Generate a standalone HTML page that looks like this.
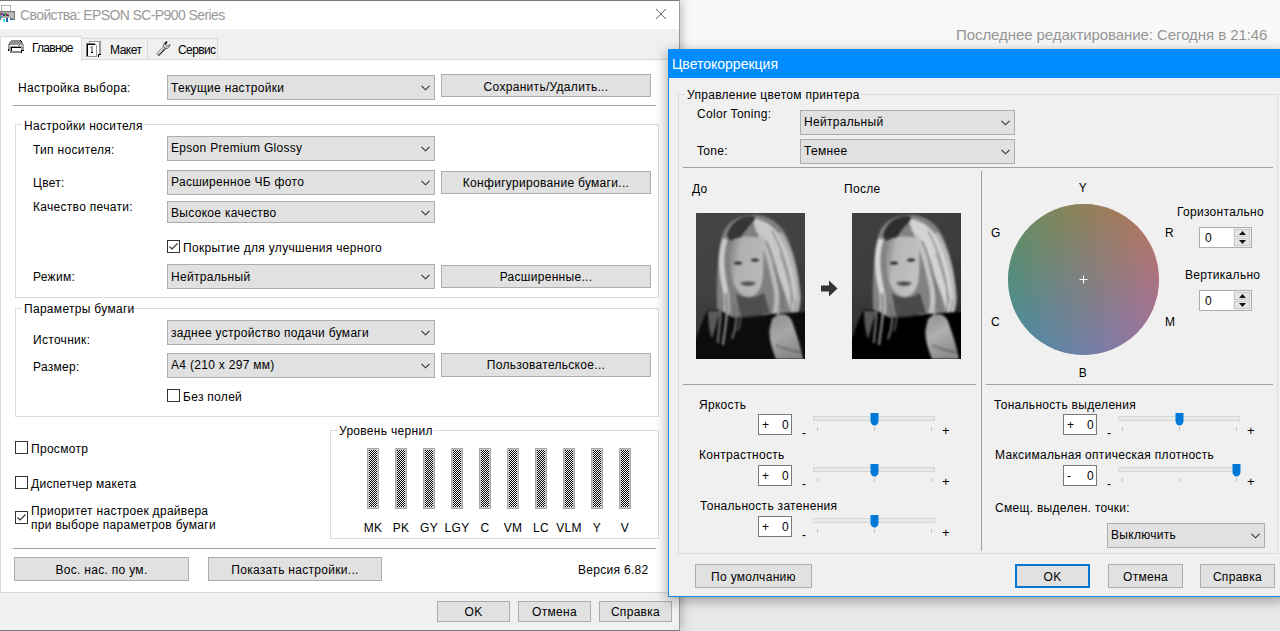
<!DOCTYPE html><html><head><meta charset="utf-8"><style>
html,body{margin:0;padding:0;width:1280px;height:631px;overflow:hidden;background:#f9f9f9;position:relative}
.a{position:absolute}
.t{position:absolute;white-space:nowrap;font-family:"Liberation Sans",sans-serif;color:#000;letter-spacing:0.3px}
</style></head><body>
<div class="t" style="left:956px;top:26px;font-size:15px;line-height:18px;color:#959595;letter-spacing:-0.07px">Последнее редактирование: Сегодня в 21:46</div>
<div class="a" style="left:679px;top:300px;width:601px;height:331px;background:#e8e8e8"></div>
<div class="a" style="left:0px;top:0px;width:679px;height:631px;box-shadow:2px 0 10px rgba(0,0,0,0.28)"></div>
<div class="a" style="left:0px;top:0px;width:680px;height:631px;background:#f0f0f0;border:1px solid #9a9a9a;border-bottom-color:#7a7a7a;box-sizing:border-box;border-left:none"></div>
<div class="a" style="left:0px;top:0px;width:679px;height:29px;background:#fff;border-top:1px solid #7a7a7a;box-sizing:border-box"></div>
<div class="t" style="left:20px;top:6px;font-size:14px;line-height:18px;color:#999;letter-spacing:-0.6px">Свойства: EPSON SC-P900 Series</div>
<svg width="16" height="20" style="position:absolute;left:0;top:4px" viewBox="0 0 16 20" shape-rendering="crispEdges"><rect x="1.5" y="1.5" width="9" height="6" fill="#fff" stroke="#b0b0b0"/><rect x="0" y="7" width="15" height="9" fill="#a8a8a8"/><rect x="0.5" y="7.5" width="14" height="8" fill="none" stroke="#777"/><rect x="9" y="9" width="5" height="5" fill="#bbb"/><rect x="1" y="9" width="2" height="2" fill="#a030a0"/><rect x="3" y="10" width="2" height="2" fill="#2040a0"/><rect x="4" y="9" width="2" height="2" fill="#30a040"/><rect x="6" y="10" width="2" height="2" fill="#c02020"/><rect x="7" y="11" width="2" height="1" fill="#203080"/><rect x="0" y="12" width="2" height="2" fill="#30a0a0"/><rect x="1" y="14" width="9" height="5" fill="#fff"/><rect x="3" y="15" width="2" height="3" fill="#30e0e0"/><rect x="6" y="14" width="2" height="4" fill="#2060a0"/><rect x="10" y="14" width="2" height="2" fill="#3070b0"/></svg>
<svg width="12" height="12" style="position:absolute;left:655px;top:8px"><path d="M1 1 L11 11 M11 1 L1 11" stroke="#666" stroke-width="1"/></svg>
<div class="a" style="left:81px;top:38px;width:67px;height:22px;background:#f0f0f0;border:1px solid #d9d9d9;box-sizing:border-box"></div>
<div class="a" style="left:147px;top:38px;width:71px;height:22px;background:#f0f0f0;border:1px solid #d9d9d9;box-sizing:border-box"></div>
<div class="a" style="left:0px;top:59px;width:679px;height:534px;background:#fff;border:1px solid #d9d9d9;box-sizing:border-box"></div>
<div class="a" style="left:0px;top:36px;width:82px;height:25px;background:#fff;border:1px solid #d9d9d9;border-bottom:none;box-sizing:border-box"></div>
<div class="t" style="left:32px;top:41px;font-size:12px;line-height:14px;color:#000;letter-spacing:-0.75px">Главное</div>
<div class="t" style="left:110px;top:43px;font-size:12px;line-height:14px;color:#000;letter-spacing:-0.5px">Макет</div>
<div class="t" style="left:178px;top:43px;font-size:12px;line-height:14px;color:#000;letter-spacing:-0.6px">Сервис</div>
<svg width="16" height="14" style="position:absolute;left:8px;top:40px" viewBox="0 0 16 14" shape-rendering="crispEdges"><path d="M3 0 H13 V1 H14 V2 H15 V4 H1 V2 H2 V1 H3 Z" fill="#8c8c8c"/><rect x="0" y="4" width="16" height="7" fill="#9a9a9a"/><rect x="1" y="5" width="9" height="1" fill="#fff"/><rect x="12" y="5" width="3" height="1" fill="#e0e0e0"/><rect x="1" y="4" width="1" height="1" fill="#000"/><rect x="12" y="0" width="1" height="1" fill="#000"/><rect x="13" y="1" width="1" height="1" fill="#000"/><rect x="3" y="7" width="10" height="1" fill="#000"/><rect x="3" y="7" width="1" height="4" fill="#000"/><rect x="4" y="8" width="9" height="3" fill="#fff"/><rect x="2" y="11" width="11" height="2" fill="#8a8a8a"/><rect x="0" y="9" width="1" height="2" fill="#000"/><rect x="13" y="10" width="3" height="1" fill="#000"/><rect x="13" y="11" width="1" height="2" fill="#000"/></svg>
<svg width="16" height="17" style="position:absolute;left:86px;top:41px" viewBox="0 0 16 17" shape-rendering="crispEdges"><rect x="3" y="0" width="12" height="1" fill="#999"/><rect x="3" y="0" width="1" height="2" fill="#999"/><rect x="13" y="0" width="2" height="13" fill="#999"/><rect x="4" y="1" width="9" height="12" fill="#fff"/><rect x="12" y="13" width="3" height="1" fill="#000"/><rect x="12" y="13" width="1" height="3" fill="#000"/><rect x="0" y="2" width="11" height="14" fill="#fff"/><rect x="0" y="2" width="9" height="1" fill="#777"/><rect x="0" y="2" width="1" height="14" fill="#777"/><rect x="1" y="3" width="8" height="1" fill="#000"/><rect x="1" y="3" width="1" height="12" fill="#000"/><rect x="9" y="3" width="1" height="1" fill="#777"/><rect x="10" y="4" width="1" height="12" fill="#999"/><rect x="0" y="15" width="11" height="1" fill="#999"/><rect x="4" y="6" width="2" height="1" fill="#999"/><rect x="5" y="5" width="2" height="7" fill="#999"/><rect x="5" y="11" width="2" height="1" fill="#000"/></svg>
<svg width="16" height="16" style="position:absolute;left:155px;top:41px" viewBox="0 0 16 16"><path d="M1.5 12.5 L9 5 L11 7 L3.5 14.5 Z" fill="#d8d8d8" stroke="#777" stroke-width="0.8"/><path d="M3.5 14.5 L11 7" stroke="#000" stroke-width="1.3" stroke-dasharray="1.2 0.6"/><path d="M8.5 5.5 C8 3 9.5 1 12 0.8 L10.5 3 L12.5 5 L15 3.5 C15 6 13 8 10.5 7.5 Z" fill="#c8c8c8" stroke="#555" stroke-width="0.8"/><path d="M12 0.8 L10 3" stroke="#000" stroke-width="1.3"/></svg>
<div class="t" style="left:18px;top:81px;font-size:12px;line-height:14px;color:#000;">Настройка выбора:</div>
<div class="a" style="left:167px;top:75px;width:268px;height:25px;background:#e1e1e1;border:1px solid #adadad;box-sizing:border-box"></div>
<div class="t" style="left:171px;top:81px;font-size:12px;line-height:14px;color:#000;">Текущие настройки</div>
<svg width="9" height="6" viewBox="0 0 9 6" style="position:absolute;left:421px;top:85px"><path d="M0.5 0.8 L4.5 4.8 L8.5 0.8" fill="none" stroke="#333" stroke-width="1.1"/></svg>
<div class="a" style="left:441px;top:74px;width:210px;height:23px;background:#e1e1e1;border:1px solid #adadad;box-sizing:border-box"></div>
<div class="t" style="left:441.0px;width:210px;text-align:center;top:80px;font-size:12px;line-height:14px;color:#000;">Сохранить/Удалить...</div>
<div class="a" style="left:13px;top:105px;width:643px;height:1px;background:#a0a0a0"></div>
<div class="a" style="left:15px;top:124px;width:644px;height:174px;border:1px solid #dcdcdc;box-sizing:border-box"></div>
<div class="a" style="left:22px;top:122px;width:122px;height:5px;background:#fff"></div>
<div class="t" style="left:24px;top:119px;font-size:12px;line-height:14px;color:#000;">Настройки носителя</div>
<div class="t" style="left:33px;top:143px;font-size:12px;line-height:14px;color:#000;">Тип носителя:</div>
<div class="a" style="left:167px;top:136px;width:268px;height:25px;background:#e1e1e1;border:1px solid #adadad;box-sizing:border-box"></div>
<div class="t" style="left:171px;top:141px;font-size:12px;line-height:14px;color:#000;">Epson Premium Glossy</div>
<svg width="9" height="6" viewBox="0 0 9 6" style="position:absolute;left:421px;top:146px"><path d="M0.5 0.8 L4.5 4.8 L8.5 0.8" fill="none" stroke="#333" stroke-width="1.1"/></svg>
<div class="t" style="left:33px;top:176px;font-size:12px;line-height:14px;color:#000;">Цвет:</div>
<div class="a" style="left:167px;top:170px;width:268px;height:25px;background:#e1e1e1;border:1px solid #adadad;box-sizing:border-box"></div>
<div class="t" style="left:171px;top:175px;font-size:12px;line-height:14px;color:#000;">Расширенное ЧБ фото</div>
<svg width="9" height="6" viewBox="0 0 9 6" style="position:absolute;left:421px;top:180px"><path d="M0.5 0.8 L4.5 4.8 L8.5 0.8" fill="none" stroke="#333" stroke-width="1.1"/></svg>
<div class="a" style="left:441px;top:171px;width:210px;height:23px;background:#e1e1e1;border:1px solid #adadad;box-sizing:border-box"></div>
<div class="t" style="left:441.0px;width:210px;text-align:center;top:176px;font-size:12px;line-height:14px;color:#000;">Конфигурирование бумаги...</div>
<div class="t" style="left:33px;top:200px;font-size:12px;line-height:14px;color:#000;">Качество печати:</div>
<div class="a" style="left:167px;top:201px;width:268px;height:22px;background:#e1e1e1;border:1px solid #adadad;box-sizing:border-box"></div>
<div class="t" style="left:171px;top:206px;font-size:12px;line-height:14px;color:#000;">Высокое качество</div>
<svg width="9" height="6" viewBox="0 0 9 6" style="position:absolute;left:421px;top:210px"><path d="M0.5 0.8 L4.5 4.8 L8.5 0.8" fill="none" stroke="#333" stroke-width="1.1"/></svg>
<div class="a" style="left:167px;top:240px;width:13px;height:13px;background:#fff;border:1px solid #333;box-sizing:border-box"></div>
<svg width="13" height="13" style="position:absolute;left:167px;top:240px"><path d="M2.5 6.5 L5 9 L10.5 3.5" fill="none" stroke="#333" stroke-width="1.2"/></svg>
<div class="t" style="left:183px;top:241px;font-size:12px;line-height:14px;color:#000;">Покрытие для улучшения черного</div>
<div class="t" style="left:33px;top:270px;font-size:12px;line-height:14px;color:#000;">Режим:</div>
<div class="a" style="left:167px;top:264px;width:268px;height:25px;background:#e1e1e1;border:1px solid #adadad;box-sizing:border-box"></div>
<div class="t" style="left:171px;top:270px;font-size:12px;line-height:14px;color:#000;">Нейтральный</div>
<svg width="9" height="6" viewBox="0 0 9 6" style="position:absolute;left:421px;top:274px"><path d="M0.5 0.8 L4.5 4.8 L8.5 0.8" fill="none" stroke="#333" stroke-width="1.1"/></svg>
<div class="a" style="left:441px;top:265px;width:210px;height:23px;background:#e1e1e1;border:1px solid #adadad;box-sizing:border-box"></div>
<div class="t" style="left:441.0px;width:210px;text-align:center;top:270px;font-size:12px;line-height:14px;color:#000;">Расширенные...</div>
<div class="a" style="left:15px;top:308px;width:644px;height:109px;border:1px solid #dcdcdc;box-sizing:border-box"></div>
<div class="a" style="left:22px;top:306px;width:110px;height:5px;background:#fff"></div>
<div class="t" style="left:24px;top:302px;font-size:12px;line-height:14px;color:#000;">Параметры бумаги</div>
<div class="t" style="left:33px;top:333px;font-size:12px;line-height:14px;color:#000;">Источник:</div>
<div class="a" style="left:167px;top:320px;width:268px;height:25px;background:#e1e1e1;border:1px solid #adadad;box-sizing:border-box"></div>
<div class="t" style="left:171px;top:326px;font-size:12px;line-height:14px;color:#000;">заднее устройство подачи бумаги</div>
<svg width="9" height="6" viewBox="0 0 9 6" style="position:absolute;left:421px;top:330px"><path d="M0.5 0.8 L4.5 4.8 L8.5 0.8" fill="none" stroke="#333" stroke-width="1.1"/></svg>
<div class="t" style="left:33px;top:360px;font-size:12px;line-height:14px;color:#000;">Размер:</div>
<div class="a" style="left:167px;top:353px;width:268px;height:25px;background:#e1e1e1;border:1px solid #adadad;box-sizing:border-box"></div>
<div class="t" style="left:171px;top:358px;font-size:12px;line-height:14px;color:#000;">A4 (210 x 297 мм)</div>
<svg width="9" height="6" viewBox="0 0 9 6" style="position:absolute;left:421px;top:363px"><path d="M0.5 0.8 L4.5 4.8 L8.5 0.8" fill="none" stroke="#333" stroke-width="1.1"/></svg>
<div class="a" style="left:441px;top:353px;width:210px;height:24px;background:#e1e1e1;border:1px solid #adadad;box-sizing:border-box"></div>
<div class="t" style="left:441.0px;width:210px;text-align:center;top:358px;font-size:12px;line-height:14px;color:#000;">Пользовательское...</div>
<div class="a" style="left:167px;top:389px;width:13px;height:13px;background:#fff;border:1px solid #333;box-sizing:border-box"></div>
<div class="t" style="left:183px;top:390px;font-size:12px;line-height:14px;color:#000;">Без полей</div>
<div class="a" style="left:15px;top:441px;width:13px;height:13px;background:#fff;border:1px solid #333;box-sizing:border-box"></div>
<div class="t" style="left:31px;top:442px;font-size:12px;line-height:14px;color:#000;">Просмотр</div>
<div class="a" style="left:15px;top:476px;width:13px;height:13px;background:#fff;border:1px solid #333;box-sizing:border-box"></div>
<div class="t" style="left:31px;top:477px;font-size:12px;line-height:14px;color:#000;">Диспетчер макета</div>
<div class="a" style="left:15px;top:511px;width:13px;height:13px;background:#fff;border:1px solid #333;box-sizing:border-box"></div>
<svg width="13" height="13" style="position:absolute;left:15px;top:511px"><path d="M2.5 6.5 L5 9 L10.5 3.5" fill="none" stroke="#333" stroke-width="1.2"/></svg>
<div class="t" style="left:31px;top:504px;font-size:12px;line-height:14px;color:#000;">Приоритет настроек драйвера</div>
<div class="t" style="left:31px;top:518px;font-size:12px;line-height:14px;color:#000;">при выборе параметров бумаги</div>
<div class="a" style="left:330px;top:430px;width:329px;height:109px;border:1px solid #dcdcdc;box-sizing:border-box"></div>
<div class="a" style="left:337px;top:428px;width:97px;height:5px;background:#fff"></div>
<div class="t" style="left:339px;top:424px;font-size:12px;line-height:14px;color:#000;">Уровень чернил</div>
<svg width="0" height="0" style="position:absolute"><defs><pattern id="chk" width="2" height="2" patternUnits="userSpaceOnUse"><rect width="2" height="2" fill="#fff"/><rect width="1" height="1" fill="#000"/><rect x="1" y="1" width="1" height="1" fill="#000"/></pattern></defs></svg>
<svg width="12" height="61" style="position:absolute;left:367px;top:448px"><rect width="12" height="61" fill="#a8a8a8"/><rect x="1" y="1" width="10" height="59" fill="#c4c4c4"/><rect x="2" y="2" width="8" height="57" fill="url(#chk)"/></svg>
<div class="t" style="left:353.0px;width:40px;text-align:center;top:521px;font-size:12px;line-height:14px;color:#000;">MK</div>
<svg width="12" height="61" style="position:absolute;left:395px;top:448px"><rect width="12" height="61" fill="#a8a8a8"/><rect x="1" y="1" width="10" height="59" fill="#c4c4c4"/><rect x="2" y="2" width="8" height="57" fill="url(#chk)"/></svg>
<div class="t" style="left:381.0px;width:40px;text-align:center;top:521px;font-size:12px;line-height:14px;color:#000;">PK</div>
<svg width="12" height="61" style="position:absolute;left:423px;top:448px"><rect width="12" height="61" fill="#a8a8a8"/><rect x="1" y="1" width="10" height="59" fill="#c4c4c4"/><rect x="2" y="2" width="8" height="57" fill="url(#chk)"/></svg>
<div class="t" style="left:409.0px;width:40px;text-align:center;top:521px;font-size:12px;line-height:14px;color:#000;">GY</div>
<svg width="12" height="61" style="position:absolute;left:451px;top:448px"><rect width="12" height="61" fill="#a8a8a8"/><rect x="1" y="1" width="10" height="59" fill="#c4c4c4"/><rect x="2" y="2" width="8" height="57" fill="url(#chk)"/></svg>
<div class="t" style="left:437.0px;width:40px;text-align:center;top:521px;font-size:12px;line-height:14px;color:#000;">LGY</div>
<svg width="12" height="61" style="position:absolute;left:479px;top:448px"><rect width="12" height="61" fill="#a8a8a8"/><rect x="1" y="1" width="10" height="59" fill="#c4c4c4"/><rect x="2" y="2" width="8" height="57" fill="url(#chk)"/></svg>
<div class="t" style="left:465.0px;width:40px;text-align:center;top:521px;font-size:12px;line-height:14px;color:#000;">C</div>
<svg width="12" height="61" style="position:absolute;left:507px;top:448px"><rect width="12" height="61" fill="#a8a8a8"/><rect x="1" y="1" width="10" height="59" fill="#c4c4c4"/><rect x="2" y="2" width="8" height="57" fill="url(#chk)"/></svg>
<div class="t" style="left:493.0px;width:40px;text-align:center;top:521px;font-size:12px;line-height:14px;color:#000;">VM</div>
<svg width="12" height="61" style="position:absolute;left:535px;top:448px"><rect width="12" height="61" fill="#a8a8a8"/><rect x="1" y="1" width="10" height="59" fill="#c4c4c4"/><rect x="2" y="2" width="8" height="57" fill="url(#chk)"/></svg>
<div class="t" style="left:521.0px;width:40px;text-align:center;top:521px;font-size:12px;line-height:14px;color:#000;">LC</div>
<svg width="12" height="61" style="position:absolute;left:563px;top:448px"><rect width="12" height="61" fill="#a8a8a8"/><rect x="1" y="1" width="10" height="59" fill="#c4c4c4"/><rect x="2" y="2" width="8" height="57" fill="url(#chk)"/></svg>
<div class="t" style="left:549.0px;width:40px;text-align:center;top:521px;font-size:12px;line-height:14px;color:#000;">VLM</div>
<svg width="12" height="61" style="position:absolute;left:591px;top:448px"><rect width="12" height="61" fill="#a8a8a8"/><rect x="1" y="1" width="10" height="59" fill="#c4c4c4"/><rect x="2" y="2" width="8" height="57" fill="url(#chk)"/></svg>
<div class="t" style="left:577.0px;width:40px;text-align:center;top:521px;font-size:12px;line-height:14px;color:#000;">Y</div>
<svg width="12" height="61" style="position:absolute;left:619px;top:448px"><rect width="12" height="61" fill="#a8a8a8"/><rect x="1" y="1" width="10" height="59" fill="#c4c4c4"/><rect x="2" y="2" width="8" height="57" fill="url(#chk)"/></svg>
<div class="t" style="left:605.0px;width:40px;text-align:center;top:521px;font-size:12px;line-height:14px;color:#000;">V</div>
<div class="a" style="left:13px;top:548px;width:643px;height:1px;background:#a0a0a0"></div>
<div class="a" style="left:14px;top:557px;width:175px;height:24px;background:#e1e1e1;border:1px solid #adadad;box-sizing:border-box"></div>
<div class="t" style="left:14.0px;width:175px;text-align:center;top:563px;font-size:12px;line-height:14px;color:#000;">Вос. нас. по ум.</div>
<div class="a" style="left:208px;top:557px;width:174px;height:24px;background:#e1e1e1;border:1px solid #adadad;box-sizing:border-box"></div>
<div class="t" style="left:208.0px;width:174px;text-align:center;top:563px;font-size:12px;line-height:14px;color:#000;">Показать настройки...</div>
<div class="t" style="left:578px;top:563px;font-size:12px;line-height:14px;color:#000;">Версия 6.82</div>
<div class="a" style="left:437px;top:601px;width:73px;height:21px;background:#e1e1e1;border:1px solid #adadad;box-sizing:border-box"></div>
<div class="t" style="left:437.0px;width:73px;text-align:center;top:605px;font-size:12px;line-height:14px;color:#000;">OK</div>
<div class="a" style="left:518px;top:601px;width:73px;height:21px;background:#e1e1e1;border:1px solid #adadad;box-sizing:border-box"></div>
<div class="t" style="left:518.0px;width:73px;text-align:center;top:605px;font-size:12px;line-height:14px;color:#000;">Отмена</div>
<div class="a" style="left:599px;top:601px;width:73px;height:21px;background:#e1e1e1;border:1px solid #adadad;box-sizing:border-box"></div>
<div class="t" style="left:599.0px;width:73px;text-align:center;top:605px;font-size:12px;line-height:14px;color:#000;">Справка</div>
<div class="a" style="left:668px;top:49px;width:620px;height:548px;box-shadow:-1px 3px 12px rgba(0,0,0,0.35)"></div>
<div class="a" style="left:668px;top:49px;width:620px;height:548px;background:#f0f0f0;border:1px solid #1e8ae6;box-sizing:border-box"></div>
<div class="a" style="left:668px;top:49px;width:620px;height:29px;background:#008cff"></div>
<div class="t" style="left:672px;top:55px;font-size:14px;line-height:18px;color:#fff;letter-spacing:0px">Цветокоррекция</div>
<div class="a" style="left:678px;top:94px;width:600px;height:460px;border:1px solid #dcdcdc;box-sizing:border-box"></div>
<div class="a" style="left:685px;top:92px;width:175px;height:5px;background:#f0f0f0"></div>
<div class="t" style="left:687px;top:88px;font-size:12px;line-height:14px;color:#000;">Управление цветом принтера</div>
<div class="t" style="left:697px;top:107px;font-size:12px;line-height:14px;color:#000;">Color Toning:</div>
<div class="a" style="left:800px;top:110px;width:215px;height:25px;background:#e1e1e1;border:1px solid #adadad;box-sizing:border-box"></div>
<div class="t" style="left:804px;top:115px;font-size:12px;line-height:14px;color:#000;">Нейтральный</div>
<svg width="9" height="6" viewBox="0 0 9 6" style="position:absolute;left:1001px;top:120px"><path d="M0.5 0.8 L4.5 4.8 L8.5 0.8" fill="none" stroke="#333" stroke-width="1.1"/></svg>
<div class="t" style="left:697px;top:144px;font-size:12px;line-height:14px;color:#000;">Tone:</div>
<div class="a" style="left:800px;top:139px;width:215px;height:25px;background:#e1e1e1;border:1px solid #adadad;box-sizing:border-box"></div>
<div class="t" style="left:804px;top:144px;font-size:12px;line-height:14px;color:#000;">Темнее</div>
<svg width="9" height="6" viewBox="0 0 9 6" style="position:absolute;left:1001px;top:149px"><path d="M0.5 0.8 L4.5 4.8 L8.5 0.8" fill="none" stroke="#333" stroke-width="1.1"/></svg>
<div class="a" style="left:683px;top:167px;width:590px;height:1px;background:#a0a0a0"></div>
<div class="a" style="left:981px;top:171px;width:1px;height:380px;background:#a0a0a0"></div>
<div class="t" style="left:692px;top:182px;font-size:12px;line-height:14px;color:#000;">До</div>
<div class="t" style="left:844px;top:182px;font-size:12px;line-height:14px;color:#000;">После</div>
<svg width="109" height="146" viewBox="0 0 109 146" style="position:absolute;left:696px;top:213px">
<defs>
<linearGradient id="bga" x1="0" y1="0" x2="0.3" y2="1"><stop offset="0" stop-color="#444"/><stop offset="0.5" stop-color="#424242"/><stop offset="1" stop-color="#2e2e2e"/></linearGradient>
<linearGradient id="fca" x1="0" y1="0" x2="1" y2="0.3"><stop offset="0" stop-color="#7a7a7a"/><stop offset="0.35" stop-color="#b0b0b0"/><stop offset="1" stop-color="#b8b8b8"/></linearGradient>
<linearGradient id="ska" x1="0" y1="0" x2="0.4" y2="1"><stop offset="0" stop-color="#8a8a8a"/><stop offset="0.5" stop-color="#a8a8a8"/><stop offset="1" stop-color="#8a8a8a"/></linearGradient>
<filter id="bla" x="-10%" y="-10%" width="120%" height="120%" color-interpolation-filters="sRGB"><feGaussianBlur stdDeviation="1"/></filter>
</defs>
<g filter="url(#bla)">
<rect x="-5" y="-5" width="119" height="156" fill="url(#bga)"/>
<path d="M28 18 C34 6 46 1 62 2 C76 4 86 12 92 26 C98 40 103 60 104 80 C105 94 102 104 96 108 L86 106 L60 100 L42 104 L34 132 L26 134 C22 114 20 90 21 66 C22 46 23 30 28 18 Z" fill="#808080"/>
<path d="M29 26 C23 44 26 62 30 80 C33 96 28 114 26 132" stroke="#cacaca" stroke-width="5.5" fill="none"/>
<path d="M30 80 C33 96 28 114 26 132" stroke="#8e8e8e" stroke-width="3" fill="none"/>
<path d="M36 86 C40 100 36 116 33 128" stroke="#7a7a7a" stroke-width="2.5" fill="none"/>
<path d="M56 5 C72 7 84 18 90 34 C96 50 100 66 102 80 L96 104 C92 90 88 76 82 62 C76 48 70 32 60 18 Z" fill="#c8c8c8"/>
<path d="M64 22 C72 38 76 56 80 76 C82 90 80 100 76 108" stroke="#bababa" stroke-width="5" fill="none"/>
<path d="M84 20 C94 36 100 56 102 78 C104 90 100 100 98 104" stroke="#b0b0b0" stroke-width="4" fill="none"/>
<path d="M70 28 C78 46 84 66 88 98" stroke="#777" stroke-width="1.6" fill="none"/>
<path d="M76 18 C84 32 90 50 94 70 C96 84 96 94 94 102" stroke="#8a8a8a" stroke-width="1.5" fill="none"/>
<path d="M84 40 C90 56 94 72 98 90" stroke="#909090" stroke-width="1.2" fill="none"/>
<path d="M31 22 C34 10 44 3 56 3 C60 4 60 6 56 10 C50 16 46 22 44 26 L34 28 Z" fill="#353535"/>
<path d="M34 28 C42 23 56 22 66 26 C68 40 68 56 66 70 C63 80 58 84 52 84 C44 82 38 76 36 64 C34 52 33 40 34 28 Z" fill="url(#fca)"/>
<ellipse cx="42" cy="50" rx="4" ry="1.5" fill="#2a2a2a"/><ellipse cx="59" cy="47" rx="4" ry="1.5" fill="#2a2a2a"/>
<path d="M44 70 C48 68 56 68 60 70 C56 74 48 74 44 70 Z" fill="#505050"/>
<path d="M40 80 C46 86 58 86 68 80 L74 100 L44 104 Z" fill="#4e4e4e"/>
<path d="M-2 150 L-2 130 C4 116 8 102 12 97 L24 97 L36 104 C48 106 62 104 74 101 C84 100 94 100 104 99 L112 99 L112 150 Z" fill="#0c0c0c"/>
<path d="M12 98 L24 98 L16 126 C13 118 12 106 12 98 Z" fill="#5a5a5a"/>
<path d="M76 106 C84 99 92 100 96 108 C100 120 104 130 107 146 L80 146 C76 136 72 124 74 114 Z" fill="url(#ska)"/>
<path d="M80 132 C88 136 98 138 106 140" stroke="#555" stroke-width="1.2" fill="none"/>
<path d="M30 84 C33 98 29 114 27 132" stroke="#8a8a8a" stroke-width="2.2" fill="none"/>
<path d="M24 90 C26 104 22 118 22 130" stroke="#7a7a7a" stroke-width="2" fill="none"/>
<path d="M38 92 C42 104 40 116 36 126" stroke="#6e6e6e" stroke-width="2" fill="none"/>
<path d="M43 96 C46 104 44 112 42 118" stroke="#606060" stroke-width="1.6" fill="none"/>
<path d="M84 96 C82 104 78 110 74 118" stroke="#9a9a9a" stroke-width="2" fill="none"/>
</g>
</svg>
<svg width="109" height="146" viewBox="0 0 109 146" style="position:absolute;left:852px;top:213px">
<defs>
<linearGradient id="bgb" x1="0" y1="0" x2="0.3" y2="1"><stop offset="0" stop-color="#444"/><stop offset="0.5" stop-color="#424242"/><stop offset="1" stop-color="#2e2e2e"/></linearGradient>
<linearGradient id="fcb" x1="0" y1="0" x2="1" y2="0.3"><stop offset="0" stop-color="#7a7a7a"/><stop offset="0.35" stop-color="#b0b0b0"/><stop offset="1" stop-color="#b8b8b8"/></linearGradient>
<linearGradient id="skb" x1="0" y1="0" x2="0.4" y2="1"><stop offset="0" stop-color="#8a8a8a"/><stop offset="0.5" stop-color="#a8a8a8"/><stop offset="1" stop-color="#8a8a8a"/></linearGradient>
<filter id="blb" x="-10%" y="-10%" width="120%" height="120%" color-interpolation-filters="sRGB"><feGaussianBlur stdDeviation="1"/><feComponentTransfer><feFuncR type="linear" slope="1.12" intercept="-0.05"/><feFuncG type="linear" slope="1.12" intercept="-0.05"/><feFuncB type="linear" slope="1.12" intercept="-0.05"/></feComponentTransfer></filter>
</defs>
<g filter="url(#blb)">
<rect x="-5" y="-5" width="119" height="156" fill="url(#bgb)"/>
<path d="M28 18 C34 6 46 1 62 2 C76 4 86 12 92 26 C98 40 103 60 104 80 C105 94 102 104 96 108 L86 106 L60 100 L42 104 L34 132 L26 134 C22 114 20 90 21 66 C22 46 23 30 28 18 Z" fill="#808080"/>
<path d="M29 26 C23 44 26 62 30 80 C33 96 28 114 26 132" stroke="#cacaca" stroke-width="5.5" fill="none"/>
<path d="M30 80 C33 96 28 114 26 132" stroke="#8e8e8e" stroke-width="3" fill="none"/>
<path d="M36 86 C40 100 36 116 33 128" stroke="#7a7a7a" stroke-width="2.5" fill="none"/>
<path d="M56 5 C72 7 84 18 90 34 C96 50 100 66 102 80 L96 104 C92 90 88 76 82 62 C76 48 70 32 60 18 Z" fill="#c8c8c8"/>
<path d="M64 22 C72 38 76 56 80 76 C82 90 80 100 76 108" stroke="#bababa" stroke-width="5" fill="none"/>
<path d="M84 20 C94 36 100 56 102 78 C104 90 100 100 98 104" stroke="#b0b0b0" stroke-width="4" fill="none"/>
<path d="M70 28 C78 46 84 66 88 98" stroke="#777" stroke-width="1.6" fill="none"/>
<path d="M76 18 C84 32 90 50 94 70 C96 84 96 94 94 102" stroke="#8a8a8a" stroke-width="1.5" fill="none"/>
<path d="M84 40 C90 56 94 72 98 90" stroke="#909090" stroke-width="1.2" fill="none"/>
<path d="M31 22 C34 10 44 3 56 3 C60 4 60 6 56 10 C50 16 46 22 44 26 L34 28 Z" fill="#353535"/>
<path d="M34 28 C42 23 56 22 66 26 C68 40 68 56 66 70 C63 80 58 84 52 84 C44 82 38 76 36 64 C34 52 33 40 34 28 Z" fill="url(#fcb)"/>
<ellipse cx="42" cy="50" rx="4" ry="1.5" fill="#2a2a2a"/><ellipse cx="59" cy="47" rx="4" ry="1.5" fill="#2a2a2a"/>
<path d="M44 70 C48 68 56 68 60 70 C56 74 48 74 44 70 Z" fill="#505050"/>
<path d="M40 80 C46 86 58 86 68 80 L74 100 L44 104 Z" fill="#4e4e4e"/>
<path d="M-2 150 L-2 130 C4 116 8 102 12 97 L24 97 L36 104 C48 106 62 104 74 101 C84 100 94 100 104 99 L112 99 L112 150 Z" fill="#0c0c0c"/>
<path d="M12 98 L24 98 L16 126 C13 118 12 106 12 98 Z" fill="#5a5a5a"/>
<path d="M76 106 C84 99 92 100 96 108 C100 120 104 130 107 146 L80 146 C76 136 72 124 74 114 Z" fill="url(#skb)"/>
<path d="M80 132 C88 136 98 138 106 140" stroke="#555" stroke-width="1.2" fill="none"/>
<path d="M30 84 C33 98 29 114 27 132" stroke="#8a8a8a" stroke-width="2.2" fill="none"/>
<path d="M24 90 C26 104 22 118 22 130" stroke="#7a7a7a" stroke-width="2" fill="none"/>
<path d="M38 92 C42 104 40 116 36 126" stroke="#6e6e6e" stroke-width="2" fill="none"/>
<path d="M43 96 C46 104 44 112 42 118" stroke="#606060" stroke-width="1.6" fill="none"/>
<path d="M84 96 C82 104 78 110 74 118" stroke="#9a9a9a" stroke-width="2" fill="none"/>
</g>
</svg>
<svg width="17" height="17" style="position:absolute;left:821px;top:280px" viewBox="0 0 17 17"><path d="M0 5.5 H8 V0.5 L16.5 8.5 L8 16.5 V11.5 H0 Z" fill="#333"/></svg>
<div class="a" style="left:1008px;top:204px;width:151px;height:151px;border-radius:50%;overflow:hidden;background:linear-gradient(to right,rgb(40,154,126),rgb(216,102,130))"><div class="a" style="left:0;top:0;width:151px;height:151px;opacity:0.5;background:linear-gradient(to bottom,rgb(160,129,48),rgb(96,127,208))"></div></div>
<svg width="9" height="9" style="position:absolute;left:1079px;top:275px"><path d="M4.5 0.5 V8.5 M0.5 4.5 H8.5" stroke="#fff" stroke-width="1"/></svg>
<div class="t" style="left:1073.0px;width:20px;text-align:center;top:181px;font-size:12px;line-height:14px;color:#000;">Y</div>
<div class="t" style="left:991px;top:226px;font-size:12px;line-height:14px;color:#000;">G</div>
<div class="t" style="left:1165px;top:226px;font-size:12px;line-height:14px;color:#000;">R</div>
<div class="t" style="left:991px;top:315px;font-size:12px;line-height:14px;color:#000;">C</div>
<div class="t" style="left:1165px;top:315px;font-size:12px;line-height:14px;color:#000;">M</div>
<div class="t" style="left:1073.0px;width:20px;text-align:center;top:366px;font-size:12px;line-height:14px;color:#000;">B</div>
<div class="t" style="left:1177px;top:205px;font-size:12px;line-height:14px;color:#000;">Горизонтально</div>
<div class="a" style="left:1199px;top:227px;width:53px;height:21px;background:#f0f0f0;border:1px solid #adadad;box-sizing:border-box"></div>
<div class="a" style="left:1200px;top:228px;width:33px;height:19px;background:#fff"></div>
<div class="a" style="left:1234px;top:229px;width:16px;height:8px;background:#e6e6e6;border:1px solid #c8c8c8;box-sizing:border-box"></div>
<div class="a" style="left:1234px;top:238px;width:16px;height:8px;background:#e6e6e6;border:1px solid #c8c8c8;box-sizing:border-box"></div>
<svg width="7" height="4" style="position:absolute;left:1239px;top:231px"><path d="M0 4 L3.5 0 L7 4 Z" fill="#111"/></svg>
<svg width="7" height="4" style="position:absolute;left:1239px;top:240px"><path d="M0 0 L3.5 4 L7 0 Z" fill="#111"/></svg>
<div class="t" style="left:1205px;top:231px;font-size:12px;line-height:14px;color:#000;">0</div>
<div class="t" style="left:1185px;top:268px;font-size:12px;line-height:14px;color:#000;">Вертикально</div>
<div class="a" style="left:1199px;top:290px;width:53px;height:21px;background:#f0f0f0;border:1px solid #adadad;box-sizing:border-box"></div>
<div class="a" style="left:1200px;top:291px;width:33px;height:19px;background:#fff"></div>
<div class="a" style="left:1234px;top:292px;width:16px;height:8px;background:#e6e6e6;border:1px solid #c8c8c8;box-sizing:border-box"></div>
<div class="a" style="left:1234px;top:301px;width:16px;height:8px;background:#e6e6e6;border:1px solid #c8c8c8;box-sizing:border-box"></div>
<svg width="7" height="4" style="position:absolute;left:1239px;top:294px"><path d="M0 4 L3.5 0 L7 4 Z" fill="#111"/></svg>
<svg width="7" height="4" style="position:absolute;left:1239px;top:303px"><path d="M0 0 L3.5 4 L7 0 Z" fill="#111"/></svg>
<div class="t" style="left:1205px;top:294px;font-size:12px;line-height:14px;color:#000;">0</div>
<div class="a" style="left:683px;top:384px;width:293px;height:1px;background:#a0a0a0"></div>
<div class="a" style="left:986px;top:384px;width:287px;height:1px;background:#a0a0a0"></div>
<div class="t" style="left:699px;top:398px;font-size:12px;line-height:14px;color:#000;">Яркость</div>
<div class="a" style="left:758px;top:414px;width:34px;height:21px;background:#fff;border:1px solid #7a7a7a;box-sizing:border-box"></div>
<div class="t" style="left:762px;top:418px;font-size:12px;line-height:14px;color:#000;">+</div>
<div class="t" style="left:782px;top:418px;font-size:12px;line-height:14px;color:#000;">0</div>
<div class="a" style="left:813px;top:416px;width:122px;height:5px;background:#e7eaea;border:1px solid #d6d6d6;box-sizing:border-box"></div>
<div class="a" style="left:817px;top:427px;width:1px;height:4px;background:#c4c4c4"></div>
<div class="a" style="left:874px;top:427px;width:1px;height:4px;background:#c4c4c4"></div>
<div class="a" style="left:931px;top:427px;width:1px;height:4px;background:#c4c4c4"></div>
<svg width="9" height="13" style="position:absolute;left:870px;top:413px"><path d="M0.5 0 H8.5 V8 C8.5 10.5 6.5 12.5 4.5 12.5 C2.5 12.5 0.5 10.5 0.5 8 Z" fill="#0078d7"/></svg>
<div class="t" style="left:802px;top:426px;font-size:12px;line-height:14px;color:#000;">-</div>
<div class="t" style="left:942px;top:424px;font-size:12px;line-height:14px;color:#000;font-size:13px">+</div>
<div class="t" style="left:699px;top:448px;font-size:12px;line-height:14px;color:#000;">Контрастность</div>
<div class="a" style="left:758px;top:465px;width:34px;height:21px;background:#fff;border:1px solid #7a7a7a;box-sizing:border-box"></div>
<div class="t" style="left:762px;top:469px;font-size:12px;line-height:14px;color:#000;">+</div>
<div class="t" style="left:782px;top:469px;font-size:12px;line-height:14px;color:#000;">0</div>
<div class="a" style="left:813px;top:467px;width:122px;height:5px;background:#e7eaea;border:1px solid #d6d6d6;box-sizing:border-box"></div>
<div class="a" style="left:817px;top:478px;width:1px;height:4px;background:#c4c4c4"></div>
<div class="a" style="left:874px;top:478px;width:1px;height:4px;background:#c4c4c4"></div>
<div class="a" style="left:931px;top:478px;width:1px;height:4px;background:#c4c4c4"></div>
<svg width="9" height="13" style="position:absolute;left:870px;top:464px"><path d="M0.5 0 H8.5 V8 C8.5 10.5 6.5 12.5 4.5 12.5 C2.5 12.5 0.5 10.5 0.5 8 Z" fill="#0078d7"/></svg>
<div class="t" style="left:802px;top:477px;font-size:12px;line-height:14px;color:#000;">-</div>
<div class="t" style="left:942px;top:475px;font-size:12px;line-height:14px;color:#000;font-size:13px">+</div>
<div class="t" style="left:700px;top:499px;font-size:12px;line-height:14px;color:#000;">Тональность затенения</div>
<div class="a" style="left:758px;top:516px;width:34px;height:21px;background:#fff;border:1px solid #7a7a7a;box-sizing:border-box"></div>
<div class="t" style="left:762px;top:520px;font-size:12px;line-height:14px;color:#000;">+</div>
<div class="t" style="left:782px;top:520px;font-size:12px;line-height:14px;color:#000;">0</div>
<div class="a" style="left:813px;top:518px;width:122px;height:5px;background:#e7eaea;border:1px solid #d6d6d6;box-sizing:border-box"></div>
<div class="a" style="left:817px;top:529px;width:1px;height:4px;background:#c4c4c4"></div>
<div class="a" style="left:874px;top:529px;width:1px;height:4px;background:#c4c4c4"></div>
<div class="a" style="left:931px;top:529px;width:1px;height:4px;background:#c4c4c4"></div>
<svg width="9" height="13" style="position:absolute;left:870px;top:515px"><path d="M0.5 0 H8.5 V8 C8.5 10.5 6.5 12.5 4.5 12.5 C2.5 12.5 0.5 10.5 0.5 8 Z" fill="#0078d7"/></svg>
<div class="t" style="left:802px;top:528px;font-size:12px;line-height:14px;color:#000;">-</div>
<div class="t" style="left:942px;top:526px;font-size:12px;line-height:14px;color:#000;font-size:13px">+</div>
<div class="t" style="left:994px;top:398px;font-size:12px;line-height:14px;color:#000;">Тональность выделения</div>
<div class="a" style="left:1063px;top:414px;width:34px;height:21px;background:#fff;border:1px solid #7a7a7a;box-sizing:border-box"></div>
<div class="t" style="left:1067px;top:418px;font-size:12px;line-height:14px;color:#000;">+</div>
<div class="t" style="left:1087px;top:418px;font-size:12px;line-height:14px;color:#000;">0</div>
<div class="a" style="left:1118px;top:416px;width:122px;height:5px;background:#e7eaea;border:1px solid #d6d6d6;box-sizing:border-box"></div>
<div class="a" style="left:1122px;top:427px;width:1px;height:4px;background:#c4c4c4"></div>
<div class="a" style="left:1179px;top:427px;width:1px;height:4px;background:#c4c4c4"></div>
<div class="a" style="left:1236px;top:427px;width:1px;height:4px;background:#c4c4c4"></div>
<svg width="9" height="13" style="position:absolute;left:1175px;top:413px"><path d="M0.5 0 H8.5 V8 C8.5 10.5 6.5 12.5 4.5 12.5 C2.5 12.5 0.5 10.5 0.5 8 Z" fill="#0078d7"/></svg>
<div class="t" style="left:1107px;top:426px;font-size:12px;line-height:14px;color:#000;">-</div>
<div class="t" style="left:1247px;top:424px;font-size:12px;line-height:14px;color:#000;font-size:13px">+</div>
<div class="t" style="left:995px;top:448px;font-size:12px;line-height:14px;color:#000;">Максимальная оптическая плотность</div>
<div class="a" style="left:1063px;top:465px;width:34px;height:21px;background:#fff;border:1px solid #7a7a7a;box-sizing:border-box"></div>
<div class="t" style="left:1067px;top:469px;font-size:12px;line-height:14px;color:#000;">-</div>
<div class="t" style="left:1087px;top:469px;font-size:12px;line-height:14px;color:#000;">0</div>
<div class="a" style="left:1118px;top:467px;width:122px;height:5px;background:#e7eaea;border:1px solid #d6d6d6;box-sizing:border-box"></div>
<div class="a" style="left:1122px;top:478px;width:1px;height:4px;background:#c4c4c4"></div>
<div class="a" style="left:1179px;top:478px;width:1px;height:4px;background:#c4c4c4"></div>
<div class="a" style="left:1236px;top:478px;width:1px;height:4px;background:#c4c4c4"></div>
<svg width="9" height="13" style="position:absolute;left:1232px;top:464px"><path d="M0.5 0 H8.5 V8 C8.5 10.5 6.5 12.5 4.5 12.5 C2.5 12.5 0.5 10.5 0.5 8 Z" fill="#0078d7"/></svg>
<div class="t" style="left:1107px;top:477px;font-size:12px;line-height:14px;color:#000;">-</div>
<div class="t" style="left:1247px;top:475px;font-size:12px;line-height:14px;color:#000;font-size:13px">+</div>
<div class="t" style="left:995px;top:501px;font-size:12px;line-height:14px;color:#000;">Смещ. выделен. точки:</div>
<div class="a" style="left:1107px;top:523px;width:158px;height:25px;background:#e1e1e1;border:1px solid #adadad;box-sizing:border-box"></div>
<div class="t" style="left:1111px;top:528px;font-size:12px;line-height:14px;color:#000;">Выключить</div>
<svg width="9" height="6" viewBox="0 0 9 6" style="position:absolute;left:1251px;top:533px"><path d="M0.5 0.8 L4.5 4.8 L8.5 0.8" fill="none" stroke="#333" stroke-width="1.1"/></svg>
<div class="a" style="left:695px;top:564px;width:117px;height:24px;background:#e1e1e1;border:1px solid #adadad;box-sizing:border-box"></div>
<div class="t" style="left:695.0px;width:117px;text-align:center;top:570px;font-size:12px;line-height:14px;color:#000;">По умолчанию</div>
<div class="a" style="left:1015px;top:564px;width:75px;height:24px;background:#e1e1e1;border:2px solid #0078d7;box-sizing:border-box"></div>
<div class="t" style="left:1015.0px;width:75px;text-align:center;top:570px;font-size:12px;line-height:14px;color:#000;">OK</div>
<div class="a" style="left:1108px;top:564px;width:75px;height:24px;background:#e1e1e1;border:1px solid #adadad;box-sizing:border-box"></div>
<div class="t" style="left:1108.0px;width:75px;text-align:center;top:570px;font-size:12px;line-height:14px;color:#000;">Отмена</div>
<div class="a" style="left:1200px;top:564px;width:75px;height:24px;background:#e1e1e1;border:1px solid #adadad;box-sizing:border-box"></div>
<div class="t" style="left:1200.0px;width:75px;text-align:center;top:570px;font-size:12px;line-height:14px;color:#000;">Справка</div>
</body></html>
